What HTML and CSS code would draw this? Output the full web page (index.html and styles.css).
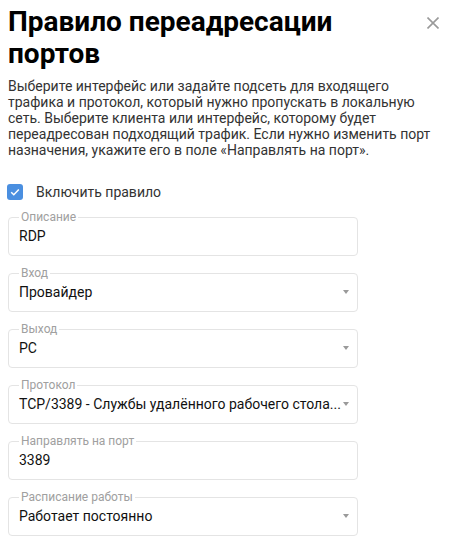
FILE: index.html
```html
<!DOCTYPE html>
<html lang="ru">
<head>
<meta charset="utf-8">
<title>Правило переадресации портов</title>
<link rel="stylesheet" href="styles.css">
</head>
<body>
<div class="dialog">
  <div class="header">
    <h1 class="title">Правило переадресации портов</h1>
    <button class="close" aria-label="Закрыть">
      <svg width="12" height="12" viewBox="0 0 12 12"><path d="M0.5 0.5 L11.5 11.5 M11.5 0.5 L0.5 11.5" stroke="#9a9a9a" stroke-width="1.6" fill="none"/></svg>
    </button>
  </div>
  <p class="desc">Выберите интерфейс или задайте подсеть для входящего трафика и протокол, который нужно пропускать в локальную сеть. Выберите клиента или интерфейс, которому будет переадресован подходящий трафик. Если нужно изменить порт назначения, укажите его в поле «Направлять на порт».</p>

  <label class="check">
    <span class="box"><svg width="16" height="16" viewBox="0 0 16 16"><rect width="16" height="16" rx="3" fill="#4a8fe0"/><path d="M4.2 8.2 L6.8 10.7 L11.8 5.4" stroke="#fff" stroke-width="1.5" fill="none"/></svg></span>
    <span class="check-text">Включить правило</span>
  </label>

  <div class="form">
    <fieldset class="field">
      <legend class="label">Описание</legend>
      <div class="value">RDP</div>
    </fieldset>
    <fieldset class="field select">
      <legend class="label">Вход</legend>
      <div class="row"><span class="value">Провайдер</span><span class="arrow"></span></div>
    </fieldset>
    <fieldset class="field select">
      <legend class="label">Выход</legend>
      <div class="row"><span class="value">PC</span><span class="arrow"></span></div>
    </fieldset>
    <fieldset class="field select">
      <legend class="label">Протокол</legend>
      <div class="row"><span class="value">TCP/3389 - Службы удалённого рабочего стола...</span><span class="arrow"></span></div>
    </fieldset>
    <fieldset class="field">
      <legend class="label">Направлять на порт</legend>
      <div class="value">3389</div>
    </fieldset>
    <fieldset class="field select">
      <legend class="label">Расписание работы</legend>
      <div class="row"><span class="value">Работает постоянно</span><span class="arrow"></span></div>
    </fieldset>
  </div>
</div>
</body>
</html>
```

FILE: styles.css
```css
html, body {
  margin: 0;
  padding: 0;
  background: #fff;
}
body {
  font-family: Roboto, "Liberation Sans", sans-serif;
  color: #222;
}
.dialog {
  padding: 6px 8px 0 8px;
}
.header {
  display: flex;
  align-items: flex-start;
  justify-content: space-between;
}
.title {
  margin: 0;
  font-size: 28px;
  line-height: 32px;
  font-weight: 700;
  color: #000;
  max-width: 380px;
}
.close {
  border: 0;
  background: none;
  padding: 0;
  margin: 11px 2px 0 0;
  width: 12px;
  height: 12px;
  display: flex;
  cursor: pointer;
}
.desc {
  margin: 8px 0 0 0;
  font-size: 14px;
  line-height: 16px;
  color: #333;
}
.check {
  display: flex;
  align-items: center;
  margin-top: 26px;
  height: 16px;
  margin-left: -1px;
}
.box {
  display: flex;
  width: 16px;
  height: 16px;
}
.check-text {
  margin-left: 13px;
  font-size: 14px;
  color: #333;
}
.form {
  width: 350px;
  margin-top: 10px;
}
.field {
  margin: 0 0 10px 0;
  padding: 2px 8px 9px 10px;
  border: 1px solid #e4e4e4;
  border-radius: 4px;
  min-width: 0;
}
.label {
  padding: 0 2px;
  font-size: 12px;
  line-height: 14px;
  color: #a0a0a0;
}
.value {
  display: block;
  font-size: 14px;
  line-height: 20px;
  color: #111;
}
.row {
  display: flex;
  align-items: center;
}
.row .value {
  flex: 1;
  min-width: 0;
  white-space: nowrap;
}
.arrow {
  flex: none;
  margin-left: 4px;
  width: 0;
  height: 0;
  border-left: 3px solid transparent;
  border-right: 3px solid transparent;
  border-top: 4px solid #9a9a9a;
}
```
